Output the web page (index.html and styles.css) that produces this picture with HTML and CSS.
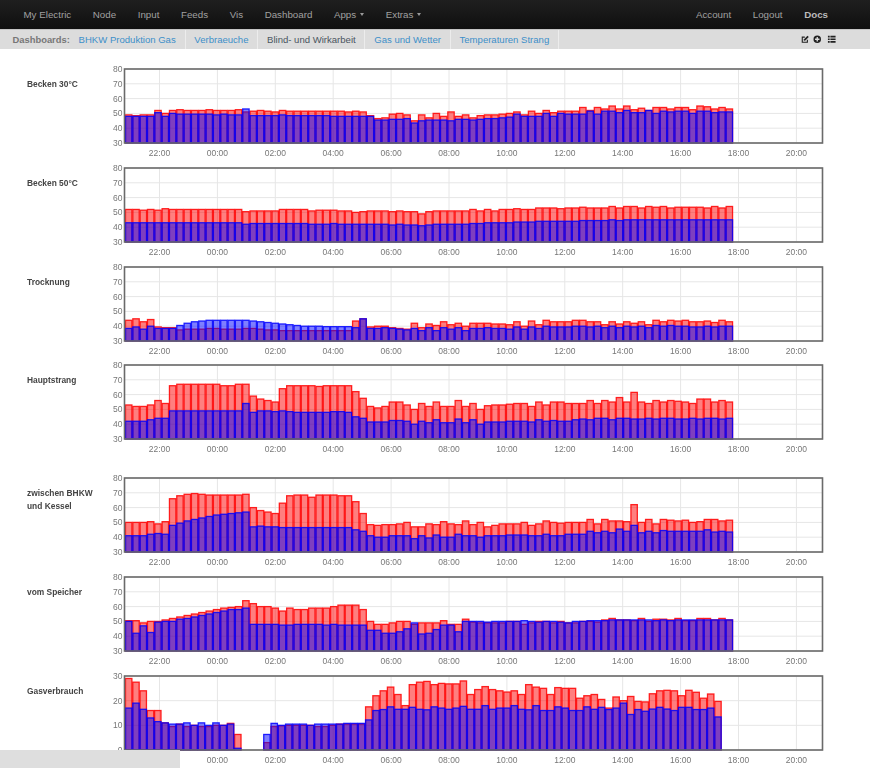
FILE: index.html
```html
<!DOCTYPE html>
<html lang="de">
<head>
<meta charset="utf-8">
<title>Dashboard</title>
<link rel="stylesheet" href="styles.css">
</head>
<body>
<div class="page">
  <nav class="navbar">
    <a class="nav-link">My Electric</a>
    <a class="nav-link">Node</a>
    <a class="nav-link">Input</a>
    <a class="nav-link">Feeds</a>
    <a class="nav-link">Vis</a>
    <a class="nav-link">Dashboard</a>
    <a class="nav-link">Apps<span class="caret"></span></a>
    <a class="nav-link">Extras<span class="caret"></span></a>
    <div class="nav-right">
      <a class="nav-link">Account</a>
      <a class="nav-link">Logout</a>
      <a class="nav-link nav-docs">Docs</a>
    </div>
  </nav>
  <div class="subnav">
    <span class="subnav-title">Dashboards:</span>
    <a class="tab">BHKW Produktion Gas</a>
    <a class="tab">Verbraeuche</a>
    <a class="tab tab-active">Blind- und Wirkarbeit</a>
    <a class="tab">Gas und Wetter</a>
    <a class="tab">Temperaturen Strang</a>
    <div class="tools">
      <svg class="tool" viewBox="0 0 10 10"><path class="tool-line" d="M7.5 5.5V8.5H1.5V2.5H4.5"/><path class="tool-fill" d="M3.6 4.9L7.6 0.9L9.1 2.4L5.1 6.4L3.3 6.7Z"/></svg>
      <svg class="tool" viewBox="0 0 10 10"><path class="tool-fill" fill-rule="evenodd" d="M5 .6a4.4 4.4 0 1 0 0 8.8a4.4 4.4 0 1 0 0-8.8ZM4.2 2.4H5.8V4.2H7.6V5.8H5.8V7.6H4.2V5.8H2.4V4.2H4.2Z"/></svg>
      <svg class="tool tool-wide" viewBox="0 0 10 10"><path class="tool-fill" d="M.5 1H2.6V3H.5ZM3.4 1H9.5V3H3.4ZM.5 4H2.6V6H.5ZM3.4 4H9.5V6H3.4ZM.5 7H2.6V9H.5ZM3.4 7H9.5V9H3.4Z"/></svg>
    </div>
  </div>
  <main class="charts" id="charts"></main>
</div>
<div class="corner-bar"></div>
<script src="app.js"></script>
</body>
</html>
```

FILE: styles.css
```css
html, body {
  margin: 0;
  padding: 0;
  height: 768px;
  overflow: hidden;
  background: #fff;
}
body {
  font-family: "Liberation Sans", Arial, sans-serif;
}
.page {
  filter: blur(0.45px);
}
.navbar {
  display: flex;
  align-items: center;
  gap: 21.6px;
  height: 29px;
  padding: 0 42px 0 23.5px;
  background: linear-gradient(#1f1f1f, #0f0f0f);
  font-size: 9.75px;
}
.nav-link {
  color: #a0a0a0;
  white-space: nowrap;
}
.nav-right {
  display: flex;
  gap: 21.6px;
  margin-left: auto;
}
.nav-docs {
  color: #bbb;
  font-weight: bold;
}
.caret {
  display: inline-block;
  margin-left: 4px;
  vertical-align: 2px;
  border-top: 3px solid #999;
  border-left: 2.5px solid transparent;
  border-right: 2.5px solid transparent;
}
.subnav {
  display: flex;
  align-items: stretch;
  height: 19px;
  padding-left: 12.5px;
  background: #dcdcdc;
  border-top: 1px solid #c4c4c4;
  font-size: 9.55px;
  line-height: 19px;
}
.subnav-title {
  color: #777;
  font-size: 9.4px;
  font-weight: bold;
}
.tab {
  padding: 0 8.8px;
  color: #3d8fc9;
  border-right: 1px solid #ececec;
}
.tab-active {
  color: #4a5560;
}
.tools {
  display: flex;
  align-items: center;
  gap: 3.5px;
  margin-left: auto;
  margin-right: 34px;
}
.tool {
  width: 8.5px;
  height: 8.5px;
}
.tool-wide {
  width: 9.5px;
  margin-left: 2px;
}
.tool-fill {
  fill: #222;
}
.tool-line {
  fill: none;
  stroke: #222;
  stroke-width: 1.3;
}
.charts {
  padding-top: 16px;
}
.row {
  display: flex;
  height: 98.75px;
}
.row-tall {
  margin-top: 14px;
}
.row-label {
  box-sizing: border-box;
  width: 110px;
  padding: 13px 0 0 27px;
  color: #444;
  font-size: 8.4px;
  font-weight: bold;
  line-height: 13px;
}
.chart {
  display: block;
  width: 730px;
  height: 96px;
}
.grid {
  stroke: #e6e6e6;
  stroke-width: 1;
}
.frame {
  fill: none;
  stroke: #6a6a6a;
  stroke-width: 1.6;
}
.tick {
  fill: #777;
  font-size: 8.5px;
  font-family: "Liberation Sans", Arial, sans-serif;
}
.tick-y {
  text-anchor: end;
}
.tick-x {
  text-anchor: middle;
}
.bar-red {
  fill: rgba(255, 0, 0, 0.5);
  stroke: rgba(255, 0, 0, 0.85);
  stroke-width: 1.3;
}
.bar-blue {
  fill: rgba(0, 0, 255, 0.5);
  stroke: rgba(0, 0, 255, 0.85);
  stroke-width: 1.3;
}
.corner-bar {
  position: fixed;
  left: 0;
  bottom: 0;
  width: 180px;
  height: 18px;
  background: #dedede;
}
```

FILE: app.js
```js
var CHARTS = [
  { label: "Becken 30°C",
    red: [49,48.5,49,49,52,50,52,52.5,52,52,52,52.5,52,52,52,52.5,51,51.5,52,51.5,51,52,51.5,51.5,51.5,51.5,51.5,51.5,51.5,51.5,51,51.5,51,48.5,46.5,47,49.5,50,49,45,49,47,50,
      48,51,48,49,47,48.5,49,49,49.5,50,51,49,51.5,50,52,50.5,51.5,51.5,51.5,54,52,54,53,55,53,55,52.5,53.5,52,54,54,53,54,54,52.5,55,54.5,53,54,53],
    blue: [48,48,48,48,50.5,48,50,49.5,49.5,49.5,49.5,49.5,49,49.5,49,49,53,48.5,48.5,48.5,48.5,49,48.5,48.5,48.5,48.5,48.5,48.5,48,48,48,48,48,48,45.5,45.5,46,46,46.5,43.5,45,45.5,45.5,
      45.5,45,46,46,45.5,46,46.5,46.5,47,47.5,49.5,48,48,48,50,48,50,49.5,49.5,49.5,51.5,49.5,51.5,51.5,50.5,52,50.5,50.5,52,50,51.5,51,51.5,51.5,50,51.5,51.5,50.5,51,51] },
  { label: "Becken 50°C",
    red: [52,52,51.5,52,51.5,52.5,52,52,52,52,52,52,52,52,52,52,50.5,51,51,51,51,52,52,52,52,51,51.5,51.5,51.5,51,51,50,50.5,51,51,51,50.5,51,50.5,50.5,49,50.5,51,51,51,51,51,52,51,52,51,52,52,52.5,52,52,53,53,53,52.5,53,53,53.5,53,53,53,54,53,54,54,53,54,53.5,54,53,53.5,53.5,53.5,53.5,53,54,53,54],
    blue: [43,43,43,43,43,43,43,43,43,43,43,43,43,43,43,43,42,42.5,42.5,42.5,42.5,42.5,42.5,42.5,42.5,42,42,42,42.5,42,42,42,42,42,42,42,41.5,42,41.5,41.5,41,41.5,42,42,42,42,42,42.5,42.5,43,43,43,43,43.5,43.5,43.5,44,44,44,44,44,44,44.5,44.5,44.5,44.5,45,44.5,45,45,45,45,45,45,45,45,45,45,45,45,45,45,45] },
  { label: "Trocknung",
    red: [44,45,43,44.5,39.5,39,39,37.5,38,38,38,38.5,38.5,38,38,38,38.5,38.5,38,37.5,37.5,37,37,37,37,37,37,37,37,37,37,43.5,45,39.5,40,40,39,38.5,38,42,39,41.5,40.5,43,41,42,40,42,42,42,41.5,41.5,41,43,40,43.5,41,44,43,43,43,44,44,43,43,41,43,41.5,43,42,43,41,44,43,44,43.5,44,43,43,43.5,42.5,44,43],
    blue: [38.5,39.5,38,40,38.5,38.5,38.5,40.5,42,43,43.5,44,44,44,44,44,44,43.5,43,42.5,42,41.5,41,40.5,40,40,40,39.7,39.7,39.7,39.7,39,45,38.5,38.5,39,38.5,38,37.5,38.5,37,39,37,39,38,39,37,38.5,38.5,39,38.5,38.5,38,39.5,38,39.5,38.5,40,39.5,39.5,39.5,40,40,39.5,40,39,40,39,40,39.5,40,39,40.5,40,40.5,40,40,39.5,39.5,40,39.5,40,40] },
  { label: "Hauptstrang",
    red: [53,52,52,53,56,54,66,67,67,67,67,67,67,66,66,67,67,59,57,56,55,64,66,66,66,66,65.5,66,66,66,66,62,57.5,52,51,52,55,55,53,50,54,52,55,52,52,56,52,54,50,52.5,53,53,53.5,54,54,52,55,53,55,55,54,54,54,56,54,56,55,58,55,61.5,55,54,56,55,56,55.5,55,54,57,57,55,56,55],
    blue: [42,42,42,43,44,44,49,49,49,49,49,49,49,49,49,49,54,48,49,49,48.5,49,48.5,48,48,48,48,48,48.5,48.5,48,45,44,41.5,41.5,41.5,42.5,42.5,42,40,42,41,43,41,41,43.5,41,43,40,41.5,41.5,41.5,42,42,42,41.5,43,42,42.5,42,42,43,43.5,43,44,44,43,44,44,43.5,43.5,44,43.5,44,44,43.5,43.5,44,43.5,44,44,43.5,44] },
  { label: "zwischen BHKW und Kessel", tall: true,
    red: [50,50,50,50.5,49,50.5,66,68,69,69.5,69,68.5,68.5,68.5,68.5,68.5,69,60,58,57,56,63,68,68.5,68.5,67,68.5,68.5,68.5,68,68,64,56,48.5,48,48.5,48.5,49,50,47,47,49,48.5,50.5,49,48.5,51,48.5,50,47,48,49,49,49,50,48,49,51,50,49.5,50,50,50,52,49,52,51,51,50.5,62,50,52,49,52,51.5,51,51.5,50,50.5,52,52,51,51.5],
    blue: [41,41,41,42,42.5,42,48,49.5,51,52,53,54,55,55.5,56,56.5,57,47,47.5,47,47,46.5,46.5,46.5,46.5,46.5,46.5,46.5,46.5,46.5,46.5,45,44,41,40,40,41,41,41,39,41,39.5,41.5,40,40,42,41,41,40,41,41,41,41.5,41.5,41.5,41,41,42,41,41,42,42,42,44,43,44,43,45.5,44,48,43,44,43,44.5,44,44,44,44,44,45,43.5,44,43.5] },
  { label: "vom Speicher",
    red: [50.5,50.5,49,50,50,51,52,53,54,55,56,57,58,59,59.5,60,64,62,60,60,59,57,59,58,58,59,59,59,60,61,61,61,58,50,48,48,49,50,50,48,49,49,49,50.5,48,48,51.5,49.5,49,49,49,49,50,50,48,49,50,50,49,50,49,49,50,50,49.5,51,52,51,51,50.5,52,50,51.5,51.5,51,52,50.5,50.5,52,52,51,52,51],
    blue: [50,42,47,42.5,49.5,50,50,51.5,52,53,54,55,56,57,58,58,59,48,48,48,48,47.5,47.5,48,48,48,48,47.5,48,47.5,47.5,47.5,47.5,44,44,42,42,43,45,49,41.5,42,44.5,47.5,47.5,43,50,50,50,49.5,50,50,50,50,50.5,50,49.5,50,50,49.5,49,50,50,50.5,50.5,50.5,51,51,51,51,51,51,50.5,51,50.5,51,51,51,51,51,51,51,51] },
  { label: "Gasverbrauch", min: 0, max: 30, ticks: [0,10,20,30], step: 7.275,
    red: [29,27.5,24,16,16,11,9.5,10.5,9.5,10,9.5,9.5,10,10,10.8,6.3,0,0,0,3,9.5,9.8,10,10,10,10,9.5,9.5,10,10.5,10.5,10.5,10.5,17.5,22,24,25.5,22.5,18,26.5,27.5,27.8,26.5,27,26.8,26.8,28,22.5,24.5,25.7,24.5,24,23.5,24,22.5,26.5,25.5,25,22.5,25.3,25,25,21,22,22.5,20.5,17,21.5,20,21.7,19.7,19.5,22.8,24,24.2,24,22,24.2,23.4,21,22.7,19.7],
    blue: [17,19,16.5,13,11.5,11,10.5,10.5,11,10,11,10,11,10,10.5,0.7,0,0,0,6.3,10.8,10,10.5,10.5,10.5,10,10.5,10.5,10.5,10.5,10.8,10.8,10.8,12.2,16,16.4,17.5,16.5,16.5,17.3,16.5,16.3,17.5,17,16.5,17,17.7,16.5,16.5,18,16.5,17,17,18,16.5,16.3,18,16,16,17.5,17,16,16,17.5,16.5,17.3,16.4,17,19,14.4,16.4,15.7,16.6,17.3,16.6,16,17.3,17.3,16.4,16.4,17,13.4] }
];

var NS = "http://www.w3.org/2000/svg";
var HOURS = ["22:00","00:00","02:00","04:00","06:00","08:00","10:00","12:00","14:00","16:00","18:00","20:00"];
var LEFT = 14.5, RIGHT = 712.5, TOP = 4, BOTTOM = 78;
var BAR_START = 15.5, BAR_WIDTH = 6.4;

function el(name, attrs, cls) {
  var node = document.createElementNS(NS, name);
  for (var k in attrs) node.setAttribute(k, attrs[k]);
  if (cls) node.setAttribute("class", cls);
  return node;
}

function drawBars(svg, values, cls, yOf, step) {
  values.forEach(function (v, i) {
    var y = yOf(v);
    svg.appendChild(el("rect", {
      x: BAR_START + i * step,
      y: y,
      width: BAR_WIDTH,
      height: Math.max(BOTTOM - y, 0)
    }, cls));
  });
}

function drawChart(cfg) {
  var min = cfg.min === undefined ? 30 : cfg.min;
  var max = cfg.max === undefined ? 80 : cfg.max;
  var ticks = cfg.ticks || [30,40,50,60,70,80];
  var step = cfg.step || 7.325;
  var yOf = function (v) { return BOTTOM - (v - min) / (max - min) * (BOTTOM - TOP); };
  var svg = el("svg", { viewBox: "0 0 730 96" }, "chart");

  ticks.forEach(function (t) {
    var y = yOf(t);
    svg.appendChild(el("line", { x1: LEFT, x2: RIGHT, y1: y, y2: y }, "grid"));
    var label = el("text", { x: 12.5, y: y + 3 }, "tick tick-y");
    label.textContent = t;
    svg.appendChild(label);
  });
  HOURS.forEach(function (h, i) {
    var x = 49.5 + i * 57.9;
    svg.appendChild(el("line", { x1: x, x2: x, y1: TOP, y2: BOTTOM }, "grid"));
    var label = el("text", { x: x, y: 91 }, "tick tick-x");
    label.textContent = h;
    svg.appendChild(label);
  });

  drawBars(svg, cfg.red, "bar-red", yOf, step);
  drawBars(svg, cfg.blue, "bar-blue", yOf, step);
  svg.appendChild(el("rect", { x: LEFT, y: TOP, width: RIGHT - LEFT, height: BOTTOM - TOP }, "frame"));
  return svg;
}

var root = document.getElementById("charts");
CHARTS.forEach(function (cfg) {
  var row = document.createElement("section");
  row.className = cfg.tall ? "row row-tall" : "row";
  var label = document.createElement("div");
  label.className = "row-label";
  label.textContent = cfg.label;
  row.appendChild(label);
  row.appendChild(drawChart(cfg));
  root.appendChild(row);
});
```
